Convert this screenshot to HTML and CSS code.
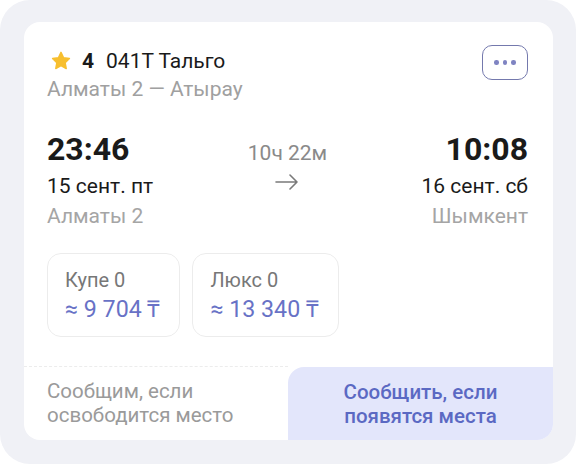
FILE: index.html
```html
<!DOCTYPE html>
<html lang="ru">
<head>
    <meta charset="UTF-8">
    <meta name="viewport" content="width=device-width, initial-scale=1.0">
    <title>041Т Тальго</title>
    <link rel="stylesheet" href="styles.css">
</head>
<body>
    <div class="screen">
        <div class="card">
            <div class="card-body">
                <div class="header">
                    <div>
                        <div class="title">
                            <svg class="star" width="22" height="22" viewBox="0 0 24 24">
                                <path d="M12 2.6l2.8 5.9 6.4.8-4.7 4.5 1.2 6.4L12 17.1l-5.7 3.1 1.2-6.4-4.7-4.5 6.4-.8z"/>
                            </svg>
                            <span class="rating">4</span>
                            <span>041Т Тальго</span>
                        </div>
                        <div class="route">Алматы 2 — Атырау</div>
                    </div>
                    <button class="more" type="button">
                        <span></span><span></span><span></span>
                    </button>
                </div>

                <div class="trip">
                    <div class="point">
                        <div class="time">23:46</div>
                        <div class="date">15 сент. пт</div>
                        <div class="station">Алматы 2</div>
                    </div>
                    <div class="duration">
                        <div class="duration-text">10ч 22м</div>
                        <svg class="arrow" width="24" height="16" viewBox="0 0 24 16">
                            <path d="M1 8H22M15 1l7 7-7 7"/>
                        </svg>
                    </div>
                    <div class="point point-end">
                        <div class="time">10:08</div>
                        <div class="date">16 сент. сб</div>
                        <div class="station">Шымкент</div>
                    </div>
                </div>

                <div class="prices">
                    <div class="price-box">
                        <div class="price-label">Купе 0</div>
                        <div class="price">≈ 9 704 ₸</div>
                    </div>
                    <div class="price-box">
                        <div class="price-label">Люкс 0</div>
                        <div class="price">≈ 13 340 ₸</div>
                    </div>
                </div>
            </div>

            <div class="footer">
                <div class="footer-note">Сообщим, если<br>освободится место</div>
                <button class="notify" type="button">Сообщить, если<br>появятся места</button>
            </div>
        </div>
    </div>
</body>
</html>
```

FILE: styles.css
```css
body {
    margin: 0;
    background-color: #fff;
    font-family: Roboto, "Liberation Sans", Arial, sans-serif;
    color: #1a1a1a;
}
.screen {
    width: 576px;
    height: 464px;
    box-sizing: border-box;
    padding: 22px 23px 24px 24px;
    background-color: #f0f1f6;
    border-radius: 30px;
}
.card {
    height: 418px;
    background-color: #fff;
    border-radius: 16px;
    overflow: hidden;
    display: flex;
    flex-direction: column;
}
.card-body {
    padding: 25px 25px 0 23px;
    flex: 1;
}
.header {
    display: flex;
    justify-content: space-between;
    align-items: flex-start;
}
.title {
    display: flex;
    align-items: center;
    font-size: 21px;
    line-height: 28px;
}
.star {
    margin-left: 3px;
    margin-right: 10px;
}
.star path {
    fill: #f7bf2f;
    stroke: #f7bf2f;
    stroke-width: 1.6;
    stroke-linejoin: round;
}
.rating {
    font-weight: 700;
    margin-right: 12px;
}
.route {
    font-size: 21px;
    line-height: 28px;
    color: #a0a0a0;
}
.more {
    width: 46px;
    height: 35px;
    margin-top: -2px;
    padding: 0;
    border: 1.5px solid #7479ad;
    border-radius: 10px;
    background-color: #fff;
    display: flex;
    justify-content: center;
    align-items: center;
    gap: 4px;
    cursor: pointer;
}
.more span {
    width: 4.5px;
    height: 4.5px;
    border-radius: 50%;
    background-color: #7f84c2;
}
.trip {
    display: grid;
    grid-template-columns: 1fr auto 1fr;
    margin-top: 26px;
}
.point-end {
    text-align: right;
}
.time {
    font-size: 32px;
    line-height: 40px;
    font-weight: 700;
}
.date {
    font-size: 21px;
    line-height: 28px;
    margin-top: 3px;
}
.station {
    font-size: 21px;
    line-height: 28px;
    margin-top: 2px;
    color: #a5a5a5;
}
.duration {
    display: flex;
    flex-direction: column;
    align-items: center;
    padding-top: 10px;
}
.duration-text {
    font-size: 21px;
    line-height: 28px;
    color: #8a8a8a;
}
.arrow {
    margin-top: 7px;
}
.arrow path {
    fill: none;
    stroke: #7a7a7a;
    stroke-width: 1.6;
    stroke-linecap: round;
    stroke-linejoin: round;
}
.prices {
    display: flex;
    gap: 12px;
    margin-top: 23px;
}
.price-box {
    border: 1px solid #ececec;
    border-radius: 14px;
    padding: 13px 19px 12px 17px;
}
.price-label {
    font-size: 20px;
    line-height: 26px;
    color: #777;
}
.price {
    font-size: 23.2px;
    line-height: 30px;
    margin-top: 1px;
    color: #6872c6;
}
.footer {
    display: grid;
    grid-template-columns: 264px 1fr;
    height: 73px;
}
.footer-note {
    border-top: 1px dashed #ececec;
    margin-top: -1px;
    padding: 12px 0 0 23px;
    font-size: 20.5px;
    line-height: 24px;
    color: #9a9a9a;
}
.notify {
    border: none;
    border-top-left-radius: 16px;
    background-color: #e3e6fb;
    color: #5b69c3;
    font-family: inherit;
    font-size: 20.5px;
    line-height: 24px;
    font-weight: 500;
    cursor: pointer;
}
```
